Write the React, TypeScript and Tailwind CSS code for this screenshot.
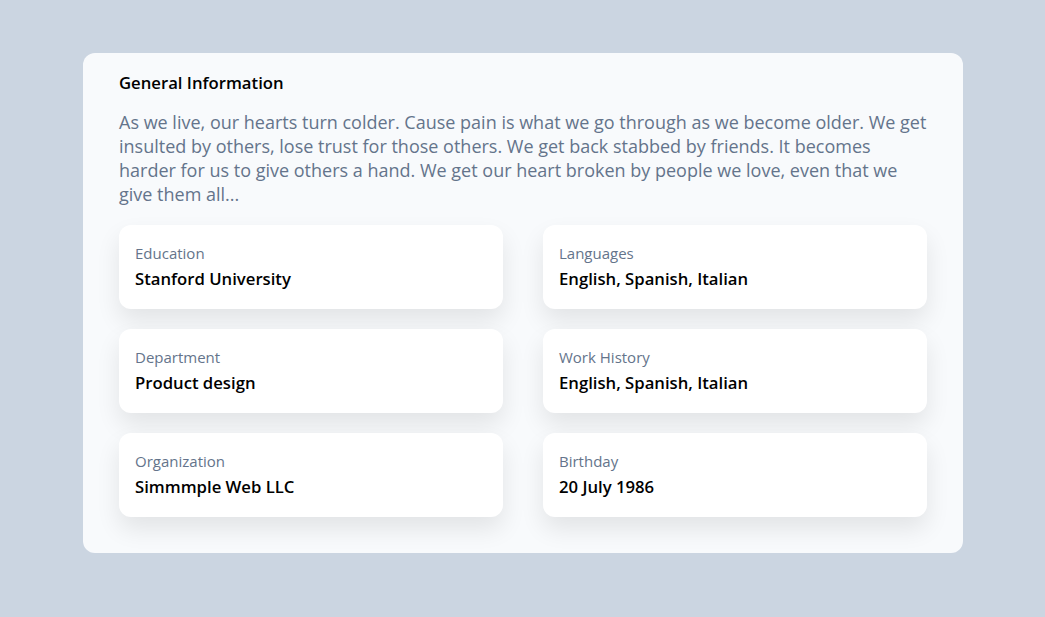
import React from "react";

const items = [
  { label: "Education", value: "Stanford University" },
  { label: "Languages", value: "English, Spanish, Italian" },
  { label: "Department", value: "Product design" },
  { label: "Work History", value: "English, Spanish, Italian" },
  { label: "Organization", value: "Simmmple Web LLC" },
  { label: "Birthday", value: "20 July 1986" },
];

export default function App() {
  return (
    <div
      className="min-h-[617px] w-full bg-[#cbd5e1] pt-[53px] pl-[83px]"
      style={{ fontFamily: '"Open Sans", "Noto Sans", sans-serif' }}
    >
      <div className="w-[880px] h-[500px] rounded-xl bg-[#f8fafc] px-[36px] pt-[18px]">
        <h2 className="text-[16.7px] leading-6 font-semibold text-black">General Information</h2>
        <p className="mt-[15px] text-[18px] leading-6 text-[#64748b]">
          As we live, our hearts turn colder. Cause pain is what we go through as we become older. We get
          insulted by others, lose trust for those others. We get back stabbed by friends. It becomes
          harder for us to give others a hand. We get our heart broken by people we love, even that we
          give them all...
        </p>
        <div className="mt-[19px] grid grid-cols-2 gap-x-[40px] gap-y-[20px]">
          {items.map((it) => (
            <div
              key={it.label}
              className="h-[84px] rounded-xl bg-white px-4 py-[18px] shadow-[0_12px_24px_rgba(0,0,0,0.09)]"
            >
              <div className="text-[15px] leading-5 text-[#64748b]">{it.label}</div>
              <div className="mt-[2px] text-[16.7px] leading-7 font-semibold text-black">{it.value}</div>
            </div>
          ))}
        </div>
      </div>
    </div>
  );
}
